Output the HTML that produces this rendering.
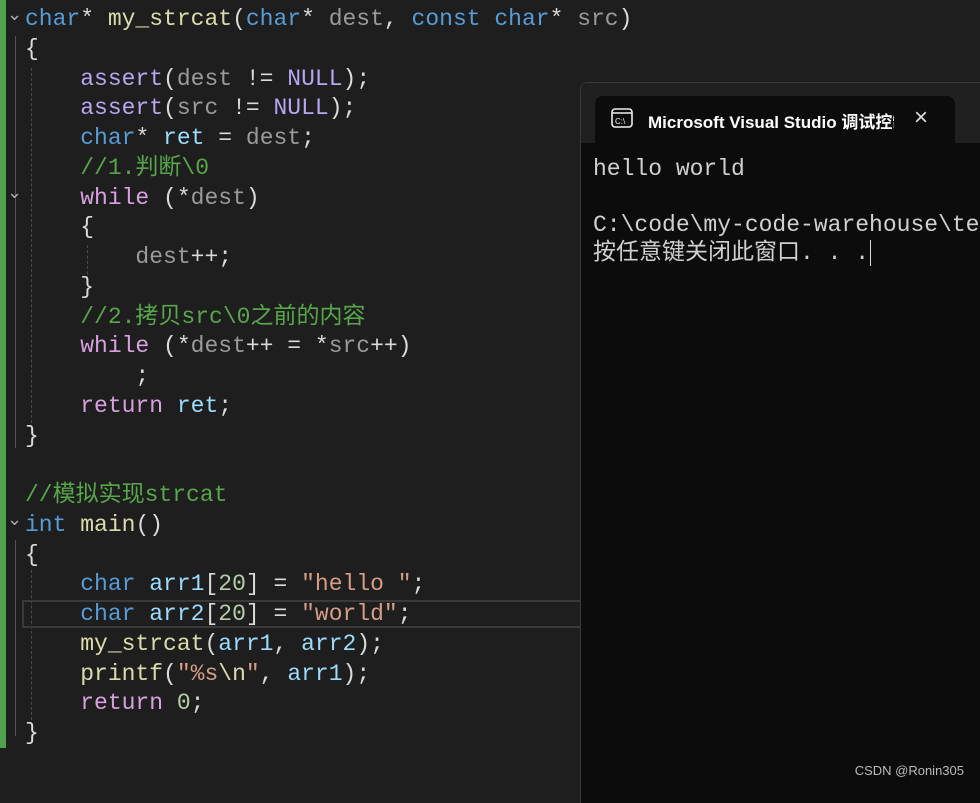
<!DOCTYPE html>
<html><head><meta charset="utf-8"><style>
html,body{margin:0;padding:0;}
body{width:980px;height:788px;background:#1e1e1e;position:relative;overflow:hidden;font-family:"Liberation Mono","Noto Sans CJK SC",monospace;}
.bar{position:absolute;left:0;top:0;width:6px;height:748px;background:#4ea24a;}
.code{position:absolute;left:25px;top:5px;font-size:23px;line-height:29.75px;color:#dadada;white-space:pre;}
.k{color:#569cd6}.f{color:#dcdcaa}.p{color:#9a9a9a}.m{color:#b8a6f0}.c{color:#57a64a}.s{color:#d69d85}.v{color:#9cdcfe}.n{color:#b5cea8}.ctl{color:#d8a0df}
.guide{position:absolute;border-left:1px dashed #4a4a4a;}
.fold{position:absolute;left:7px;color:#aaa;font-size:18px;font-family:"DejaVu Sans",sans-serif;}
.fl{position:absolute;border-left:1px solid #555;}
.sel{position:absolute;left:22px;top:600px;width:560px;height:28px;border:2px solid #3a3a3a;box-sizing:border-box;}
.term{position:absolute;left:580px;top:82px;width:420px;height:720px;background:#0c0c0c;border-left:1px solid #3a3a3a;border-top:1px solid #3a3a3a;border-radius:8px 0 0 0;}
.tbar{position:absolute;left:0;top:0;right:0;height:60px;background:#202020;border-radius:8px 0 0 0;}
.tab{position:absolute;left:14px;top:13px;width:360px;height:47px;background:#0c0c0c;border-radius:8px 8px 0 0;}
.ttl{position:absolute;left:53px;top:12px;color:#fff;font-family:"Liberation Sans","Noto Sans CJK SC",sans-serif;font-size:17px;font-weight:600;white-space:nowrap;overflow:hidden;width:246px;}
.x{position:absolute;left:319px;top:8px;color:#ddd;font-size:24px;font-weight:200;font-family:"Liberation Sans",sans-serif;}
.tt{position:absolute;left:12px;top:72px;color:#d0d0d0;font-size:23px;line-height:28px;white-space:pre;}
.wm{position:absolute;right:16px;top:763px;color:#bbb;font-family:"Liberation Sans",sans-serif;font-size:13px;}
</style></head><body>
<div class="bar"></div>
<div class="fl" style="left:15px;top:36px;height:412px"></div>
<div class="fl" style="left:15px;top:540px;height:196px"></div>
<div class="guide" style="left:31px;top:68px;height:360px"></div>
<div class="guide" style="left:87px;top:245px;height:40px"></div>
<div class="guide" style="left:31px;top:570px;height:150px"></div>
<div class="fold" style="top:4px">⌄</div>
<div class="fold" style="top:182px">⌄</div>
<div class="fold" style="top:509px">⌄</div>
<div class="sel"></div>
<div class="code"><span class="k">char</span>* <span class="f">my_strcat</span>(<span class="k">char</span>* <span class="p">dest</span>, <span class="k">const</span> <span class="k">char</span>* <span class="p">src</span>)
{
    <span class="m">assert</span>(<span class="p">dest</span> != <span class="m">NULL</span>);
    <span class="m">assert</span>(<span class="p">src</span> != <span class="m">NULL</span>);
    <span class="k">char</span>* <span class="v">ret</span> = <span class="p">dest</span>;
    <span class="c">//1.判断\0</span>
    <span class="ctl">while</span> (*<span class="p">dest</span>)
    {
        <span class="p">dest</span>++;
    }
    <span class="c">//2.拷贝src\0之前的内容</span>
    <span class="ctl">while</span> (*<span class="p">dest</span>++ = *<span class="p">src</span>++)
        ;
    <span class="ctl">return</span> <span class="v">ret</span>;
}

<span class="c">//模拟实现strcat</span>
<span class="k">int</span> <span class="f">main</span>()
{
    <span class="k">char</span> <span class="v">arr1</span>[<span class="n">20</span>] = <span class="s">"hello "</span>;
    <span class="k">char</span> <span class="v">arr2</span>[<span class="n">20</span>] = <span class="s">"world"</span>;
    <span class="f">my_strcat</span>(<span class="v">arr1</span>, <span class="v">arr2</span>);
    <span class="f">printf</span>(<span class="s">"%s</span><span class="f">\n</span><span class="s">"</span>, <span class="v">arr1</span>);
    <span class="ctl">return</span> <span class="n">0</span>;
}</div>
<div class="term">
 <div class="tbar"><div class="tab">
  <svg style="position:absolute;left:16px;top:12px" width="22" height="20" viewBox="0 0 22 20"><rect x="1" y="1" width="20" height="18" rx="3" fill="none" stroke="#eee" stroke-width="1.6"/><line x1="1" y1="5" x2="21" y2="5" stroke="#eee" stroke-width="1.4"/><text x="4" y="16" font-size="8" fill="#eee" font-family="Liberation Sans">C:\</text></svg>
  <div class="ttl">Microsoft Visual Studio 调试控制台</div>
  <div class="x">×</div>
 </div></div>
 <div class="tt">hello world

C:\code\my-code-warehouse\test
按任意键关闭此窗口. . .<span style="border-left:1px solid #ddd;margin-left:1px"></span></div>
</div>
<div class="wm">CSDN @Ronin305</div>
</body></html>
